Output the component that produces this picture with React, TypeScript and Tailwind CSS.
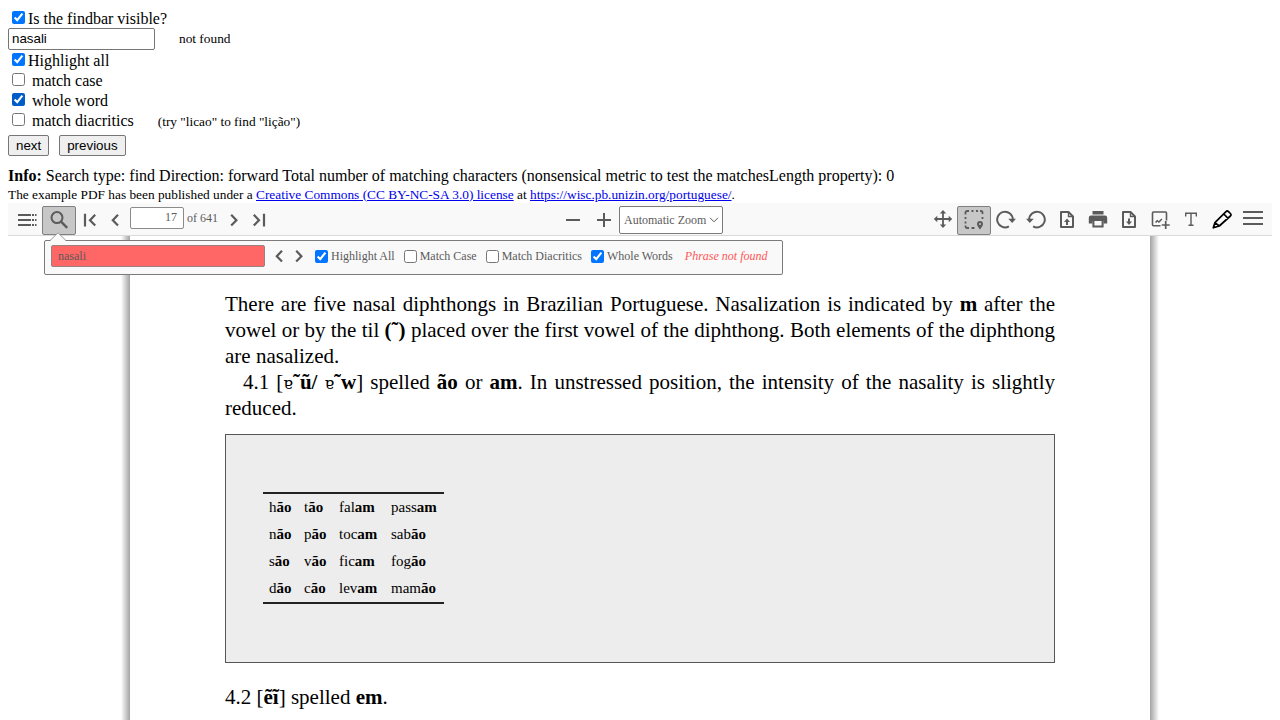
import type { ReactNode } from "react";

function Icon({ children, className = "text-[#5b5b5b]" }: { children: ReactNode; className?: string }) {
  return (
    <svg
      viewBox="0 0 20 20"
      className={`size-5 shrink-0 ${className}`}
      fill="none"
      stroke="currentColor"
      strokeWidth="2"
      aria-hidden="true"
    >
      {children}
    </svg>
  );
}

function ToolButton({
  label,
  width = "w-[31px]",
  active = false,
  children,
}: {
  label: string;
  width?: string;
  active?: boolean;
  children: ReactNode;
}) {
  return (
    <button
      type="button"
      aria-label={label}
      title={label}
      className={`flex h-[29px] shrink-0 items-center justify-center pb-px ${width} ${
        active ? "rounded-xs border border-[#808080] bg-[#c7c7c7]" : ""
      }`}
    >
      {children}
    </button>
  );
}

function Chevron({ left = false }: { left?: boolean }) {
  return (
    <Icon>
      <path d={left ? "M13 4.8 7.8 10.2 13 15.6" : "M7.2 4.8 12.4 10.2 7.2 15.6"} strokeWidth="2.2" />
    </Icon>
  );
}

function OptionRow({
  id,
  label,
  checked = false,
  gap = "ml-[7px]",
  accent = "accent-[#0075ff]",
  children,
}: {
  id: string;
  label: string;
  checked?: boolean;
  gap?: string;
  accent?: string;
  children?: ReactNode;
}) {
  return (
    <div className="flex h-5 items-start leading-[22px]">
      <input id={id} type="checkbox" defaultChecked={checked} className={`mt-[3px] ml-1 size-[13px] ${accent}`} />
      <label htmlFor={id} className={gap}>
        {label}
      </label>
      {children}
    </div>
  );
}

function SettingsForm() {
  const button =
    "h-[21px] rounded-xs border border-[#767676] bg-[#efefef] px-[7px] font-['Liberation_Sans',sans-serif] [font-size:smaller] leading-[19px]";
  return (
    <form>
      <OptionRow id="visible" label="Is the findbar visible?" checked gap="ml-[3px]" />
      <div className="flex h-[22px] items-center">
        <input
          type="text"
          aria-label="Search text"
          defaultValue="nasali"
          className="h-[22px] w-[147px] rounded-xs border border-[#767676] bg-white px-[3px] pb-0.5 font-['Liberation_Sans',sans-serif] [font-size:smaller]"
        />
        <span className="ml-6 [font-size:smaller]">not found</span>
      </div>
      <OptionRow id="highlight" label="Highlight all" checked gap="ml-[3px]" />
      <OptionRow id="case" label="match case" />
      <OptionRow id="word" label="whole word" checked accent="accent-[#005cc8]" />
      <OptionRow id="diacritics" label="match diacritics">
        <span className="ml-6 [font-size:smaller] leading-6">(try "licao" to find "lição")</span>
      </OptionRow>
      <div className="mt-[5px] flex gap-[10px]">
        <button type="button" className={button}>
          next
        </button>
        <button type="button" className={button}>
          previous
        </button>
      </div>
    </form>
  );
}

function Toolbar() {
  return (
    <div className="grid h-[33px] grid-cols-[1fr_auto_1fr] items-center border-b border-[#d9d9d9] bg-[#f9f9fa] pt-[3px] text-xs text-[#5b5b5b]">
      <div className="flex items-center pl-[3px]">
        <ToolButton label="Toggle Sidebar">
          <Icon>
            <path d="M1 5h13M1 10h13M1 15h13" />
            <path d="M15 5h2M15 10h2M15 15h2M18 5h1.500M18 10h1.500M18 15h1.500" />
          </Icon>
        </ToolButton>
        <ToolButton label="Find in Document" width="w-[34px]" active>
          <Icon>
            <circle cx="8" cy="7.600" r="5.500" />
            <path d="m11.800 11.400 6.400 6.400" strokeWidth="2.400" />
          </Icon>
        </ToolButton>
        <ToolButton label="First Page" width="w-7">
          <Icon>
            <path d="M5 3.800v12.800M15.200 4.800 10 10.200l5.200 5.400" strokeWidth="2.200" />
          </Icon>
        </ToolButton>
        <ToolButton label="Previous Page" width="w-[22px]">
          <Chevron left />
        </ToolButton>
        <input
          type="text"
          aria-label="Page"
          defaultValue="17"
          className="mb-1.5 ml-1 h-[22px] w-[54px] rounded-xs border border-[#8b8b8c] bg-white px-1.5 text-right"
        />
        <span className="mb-1.5 ml-[3px] w-[30px] whitespace-nowrap">of 641</span>
        <ToolButton label="Next Page" width="ml-1 w-[26px]">
          <Chevron />
        </ToolButton>
        <ToolButton label="Last Page" width="w-6">
          <Icon>
            <path d="M15 3.800v12.800M4.800 4.800 10 10.200l-5.200 5.400" strokeWidth="2.200" />
          </Icon>
        </ToolButton>
      </div>

      <div className="flex items-start">
        <ToolButton label="Zoom Out">
          <Icon>
            <path d="M3 10h14" />
          </Icon>
        </ToolButton>
        <ToolButton label="Zoom In">
          <Icon>
            <path d="M3 10h14M10 3v14" />
          </Icon>
        </ToolButton>
        <div className="relative">
          <select
            aria-label="Zoom"
            className="block h-7 w-[104px] appearance-none rounded-xs border border-[#7b7b7b] bg-white pl-1 text-xs"
          >
            <option>Automatic Zoom</option>
            <option>Page Fit</option>
            <option>Page Width</option>
          </select>
          <svg
            viewBox="0 0 10 6"
            className="pointer-events-none absolute top-[11px] right-1 h-1.5 w-2.5"
            fill="none"
            stroke="currentColor"
            aria-hidden="true"
          >
            <path d="m1 .8 4 4 4-4" />
          </svg>
        </div>
      </div>

      <div className="flex items-center justify-end pr-1">
        <ToolButton label="Hand Tool" width="w-7">
          <Icon>
            <path d="M10 2v14M3 9h14" strokeWidth="1.800" />
            <path
              d="M10 0 13.200 3.500H6.800zM10 18 13.200 14.500H6.800zM.8 9l3.500-3.200v6.400zM19.200 9l-3.500-3.200v6.400z"
              fill="currentColor"
              stroke="none"
            />
          </Icon>
        </ToolButton>
        <ToolButton label="Text Selection Tool" width="w-[34px]" active>
          <Icon>
            <path
              d="M1.500 4.500V2.700A1.700 1.700 0 0 1 3.200 1H5M7.500 1h2M12 1h2M16 1h.8a1.700 1.700 0 0 1 1.700 1.700V4M18.500 7v2M1.500 7v2M1.500 11.500v2M1.500 15.500v.8A1.700 1.700 0 0 0 3.200 18H5M7.500 18h3"
              strokeWidth="1.800"
            />
            <path
              d="M16 11a3 3 0 0 0-3 3c0 2 3 5.500 3 5.500s3-3.500 3-5.500a3 3 0 0 0-3-3zm0 2a1 1 0 1 1 0 2 1 1 0 0 1 0-2z"
              fill="currentColor"
              stroke="none"
            />
          </Icon>
        </ToolButton>
        <ToolButton label="Rotate Clockwise" width="w-[29px]">
          <Icon>
            <path d="M12.900 16.300A7.800 7.800 0 1 1 16.800 9.500" />
            <path d="M12.300 8.800H20L16.200 13z" fill="currentColor" stroke="none" />
          </Icon>
        </ToolButton>
        <ToolButton label="Rotate Counterclockwise">
          <Icon>
            <path d="M7.100 16.300A7.800 7.800 0 1 0 3.200 9.500" />
            <path d="M0 8.800h7.700L3.800 13z" fill="currentColor" stroke="none" />
          </Icon>
        </ToolButton>
        <ToolButton label="Open File">
          <Icon>
            <path d="M4 2h7.500L16 6.500V17H4z" strokeLinejoin="round" />
            <path d="M11.500 2v4.500H16" strokeWidth="1.400" />
            <path d="M10 8.500 13 12h-2v3H9v-3H7z" fill="currentColor" stroke="none" />
          </Icon>
        </ToolButton>
        <ToolButton label="Print">
          <Icon>
            <path
              d="M4.500 1h11v3.500h-11zM3 5.500h14a2.200 2.200 0 0 1 2.200 2.200v5.800H15.500V11h-11v2.500H.8V7.700A2.200 2.200 0 0 1 3 5.500z"
              fill="currentColor"
              stroke="none"
            />
            <path d="M5.400 10.500v6h9.200v-6" />
          </Icon>
        </ToolButton>
        <ToolButton label="Save">
          <Icon>
            <path d="M4 2h7.500L16 6.500V17H4z" strokeLinejoin="round" />
            <path d="M11.500 2v4.500H16" strokeWidth="1.400" />
            <path d="M10 15 13 11.500h-2v-3H9v3H7z" fill="currentColor" stroke="none" />
          </Icon>
        </ToolButton>
        <ToolButton label="Add Image">
          <Icon>
            <path d="M10.500 15.700H3.500a1 1 0 0 1-1-1V3a1 1 0 0 1 1-1h12a1 1 0 0 1 1 1v7.500" strokeWidth="1.600" />
            <path d="m5.500 12.500 1.700-1.800 1.700 1.300 3-3" strokeWidth="1.500" />
            <path d="M15.700 11v8M11.700 15h8" strokeWidth="1.700" />
          </Icon>
        </ToolButton>
        <ToolButton label="Add Text">
          <Icon>
            <path d="M4.700 6.500V3.300h10.600v3.200M10 3.300v11.900M7.500 15.200h5" strokeWidth="1.400" />
          </Icon>
        </ToolButton>
        <ToolButton label="Draw">
          <Icon className="text-black">
            <path
              d="m1.300 17.700 1.600-5L14 1.600a1.800 1.800 0 0 1 2.500 0l1.900 1.900a1.800 1.800 0 0 1 0 2.500L7.300 16zM11.800 4l4.300 4.300M2.900 12.700 7.300 16"
              strokeWidth="1.700"
              strokeLinejoin="round"
            />
            <path d="m.8 18.500.9-3.200 2.400 2.200z" fill="currentColor" stroke="none" />
          </Icon>
        </ToolButton>
        <ToolButton label="Tools">
          <Icon>
            <path d="M0 2h20M0 8h20M0 14h20" />
          </Icon>
        </ToolButton>
      </div>
    </div>
  );
}

function FindOption({ id, label, checked = false }: { id: string; label: string; checked?: boolean }) {
  return (
    <div className="flex items-center gap-[3px]">
      <input id={id} type="checkbox" defaultChecked={checked} className="size-[13px] accent-[#0075ff]" />
      <label htmlFor={id}>{label}</label>
    </div>
  );
}

function FindBar() {
  return (
    <div className="absolute top-1 left-9 z-10 flex h-[35px] items-center rounded-xs border border-[#7b7b7b] bg-[#f9f9fa] pr-[15px] pb-[3px] pl-1.5 text-xs whitespace-nowrap text-[#5b5b5b]">
      <svg viewBox="0 0 16 9" className="absolute -top-[9px] left-[5px] h-[9px] w-4" aria-hidden="true">
        <path d="M0 9 8 .8 16 9z" fill="#f9f9fa" />
        <path d="M0 8.500 8 .8l8 7.700" fill="none" stroke="#9b9b9b" />
      </svg>
      <input
        type="text"
        aria-label="Find"
        defaultValue="nasali"
        className="h-[22px] w-[214px] rounded-xs border border-[#9b8080] bg-[#ff6666] px-1.5"
      />
      <div className="ml-1 flex">
        <ToolButton label="Previous" width="w-5">
          <Chevron left />
        </ToolButton>
        <ToolButton label="Next" width="w-5">
          <Chevron />
        </ToolButton>
      </div>
      <div className="ml-1.5 flex gap-[9px]">
        <FindOption id="find-highlight" label="Highlight All" checked />
        <FindOption id="find-case" label="Match Case" />
        <FindOption id="find-diacritics" label="Match Diacritics" />
        <FindOption id="find-word" label="Whole Words" checked />
      </div>
      <span className="ml-3 text-[#ff5555] italic">Phrase not found</span>
    </div>
  );
}

const words = [
  [["h", "ão"], ["t", "ão"], ["fal", "am"], ["pass", "am"]],
  [["n", "ão"], ["p", "ão"], ["toc", "am"], ["sab", "ão"]],
  [["s", "ão"], ["v", "ão"], ["fic", "am"], ["fog", "ão"]],
  [["d", "ão"], ["c", "ão"], ["lev", "am"], ["mam", "ão"]],
];

function FullLine({ children }: { children: ReactNode }) {
  return <span className="block [text-align-last:justify]">{children}</span>;
}

function NasalVowel() {
  return (
    <>
      <span className="font-['DejaVu_Serif',serif] text-base leading-none">ɐ</span>
      <b>˜</b>
    </>
  );
}

function Document() {
  return (
    <div className="flex flex-1 justify-center">
      <div className="w-[9px] bg-linear-to-l from-[#a3a3a3] to-white" />
      <article className="w-full max-w-[1020px] bg-white px-[95px] pt-[55px] pb-2 text-[21px] leading-[26px]">
        <p>
          <FullLine>
            There are five nasal diphthongs in Brazilian Portuguese. Nasalization is indicated by <b>m</b> after the
          </FullLine>
          <FullLine>
            vowel or by the til <b>(˜)</b> placed over the first vowel of the diphthong. Both elements of the diphthong
          </FullLine>
          <span className="block">are nasalized.</span>
        </p>
        <p>
          <span className="block pl-[18px] [text-align-last:justify]">
            4.1 [<NasalVowel />
            <b>ũ/</b> <NasalVowel />
            <b>w</b>] spelled <b>ão</b> or <b>am</b>. In unstressed position, the intensity of the nasality is slightly
          </span>
          <span className="block">reduced.</span>
        </p>
        <div className="mt-[13px] border border-[#555] bg-[#ededed] px-[37px] pt-[57px] pb-[58px]">
          <table className="w-[181px] table-fixed border-t-2 border-b-2 border-[#222] text-[15px] leading-[27px]">
            <colgroup>
              <col className="w-[35px]" />
              <col className="w-[35px]" />
              <col className="w-[52px]" />
              <col />
            </colgroup>
            <tbody>
              {words.map((row, r) => (
                <tr key={r} className="h-[27px]">
                  {row.map(([stem, ending], c) => (
                    <td key={c} className="pl-1.5 whitespace-nowrap">
                      {stem}
                      <b>{ending}</b>
                    </td>
                  ))}
                </tr>
              ))}
            </tbody>
          </table>
        </div>
        <p className="mt-[21px]">
          4.2 [<b>ẽĩ</b>] spelled <b>em</b>.
        </p>
      </article>
      <div className="w-[9px] bg-linear-to-r from-[#a3a3a3] to-white" />
    </div>
  );
}

export default function App() {
  return (
    <div className="flex min-h-screen flex-col bg-white px-2 pt-2 font-['Liberation_Serif',serif] text-base text-black">
      <SettingsForm />
      <p className="mt-[10px] leading-5">
        <b>Info:</b> Search type: find Direction: forward Total number of matching characters (nonsensical metric to
        test the matchesLength property): 0
      </p>
      <p className="[font-size:smaller] leading-[17px]">
        The example PDF has been published under a{" "}
        <a href="#license" className="text-[#0000ee] underline">
          Creative Commons (CC BY-NC-SA 3.0) license
        </a>{" "}
        at{" "}
        <a href="#source" className="text-[#0000ee] underline">
          https://wisc.pb.unizin.org/portuguese/
        </a>
        .
      </p>
      <Toolbar />
      <main className="relative flex flex-1 flex-col">
        <FindBar />
        <Document />
      </main>
    </div>
  );
}
